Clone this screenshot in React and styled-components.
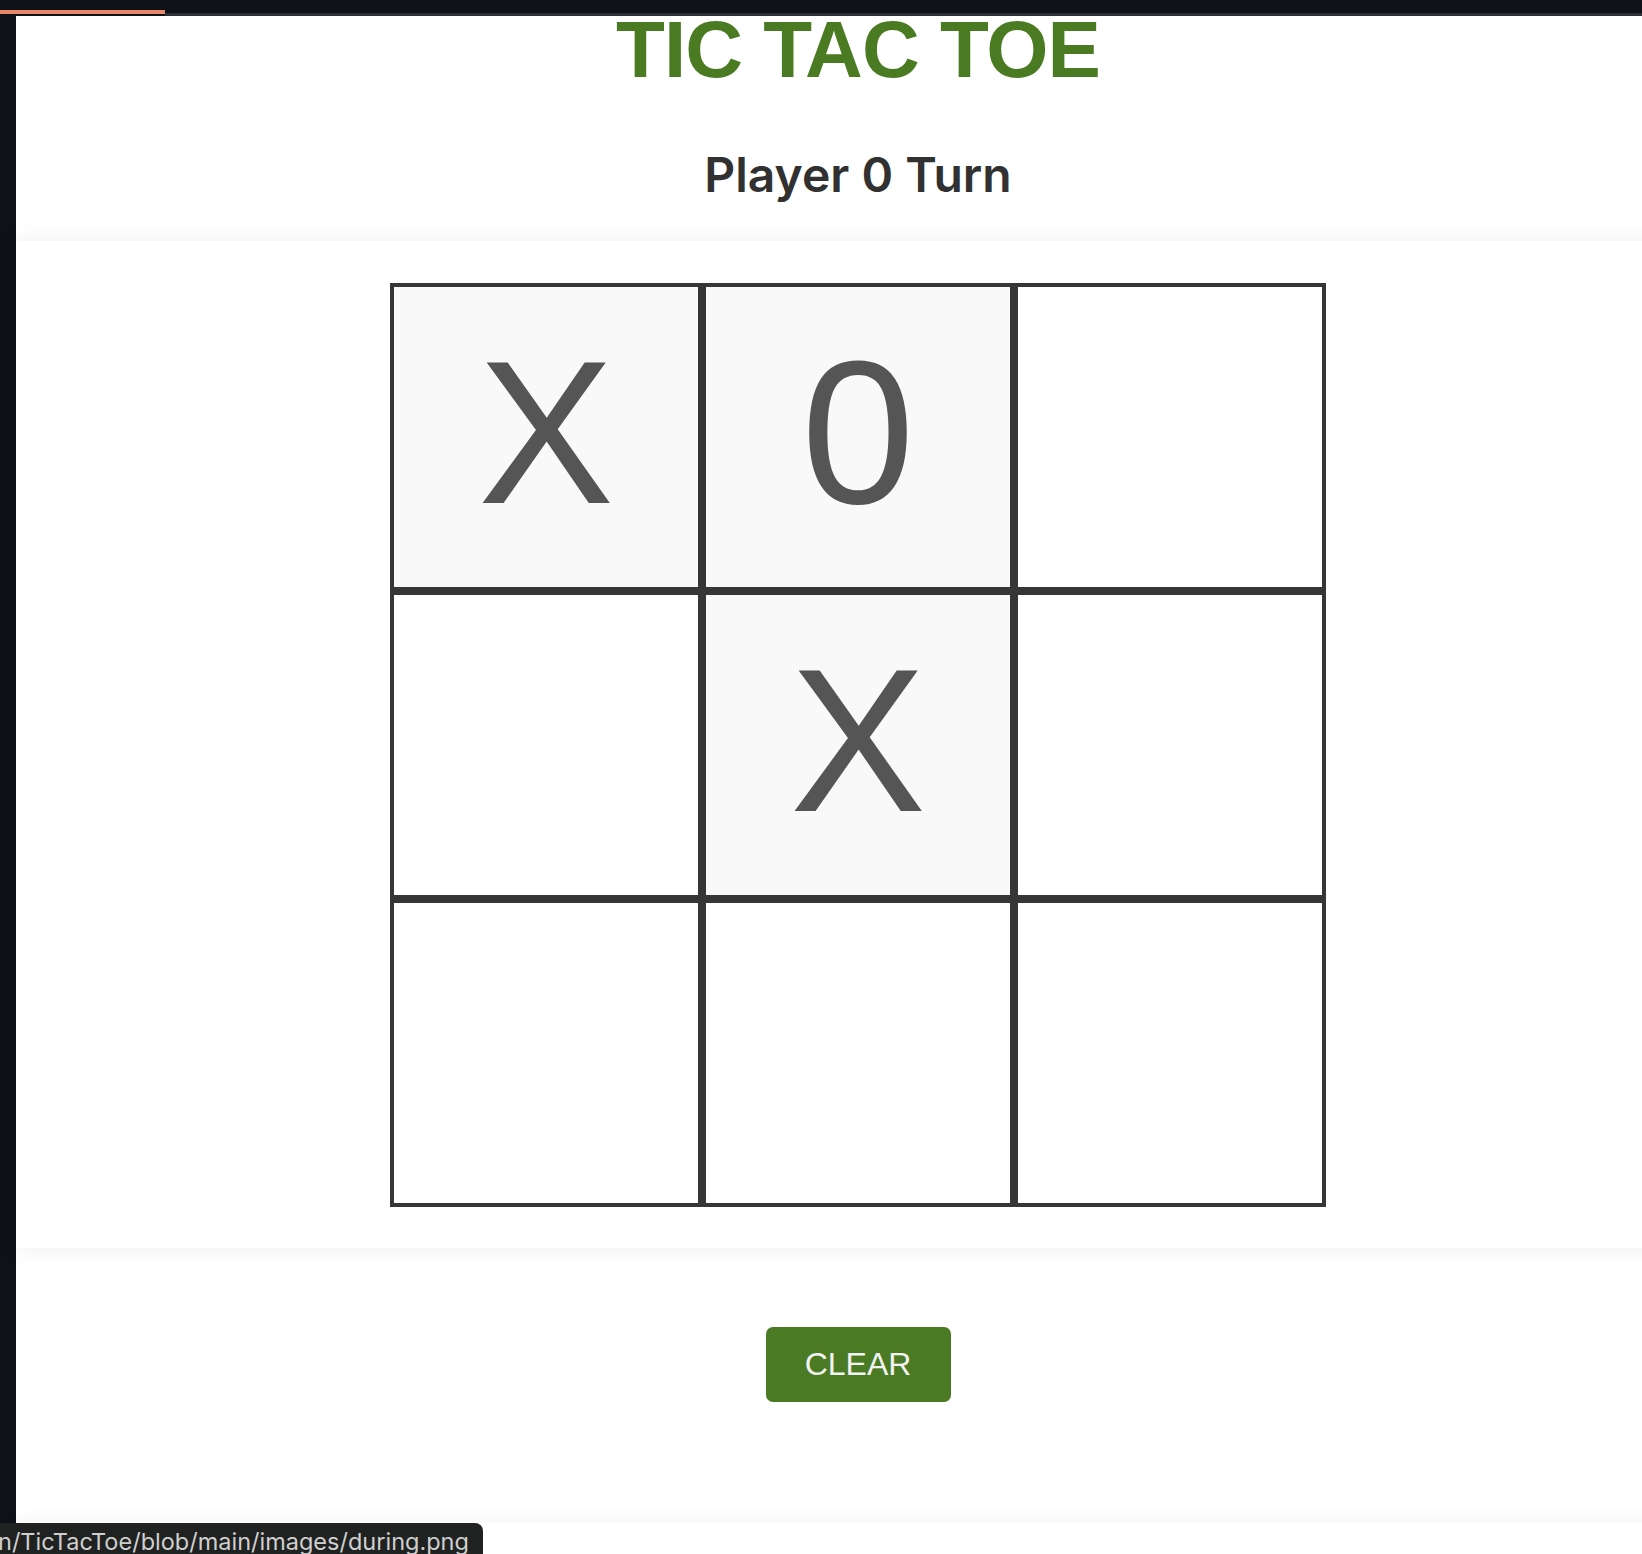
import React from "react";
import styled, { createGlobalStyle } from "styled-components";

const GlobalStyle = createGlobalStyle`
  html, body {
    margin: 0;
    padding: 0;
    background: #0e1116;
    overflow: hidden;
  }
`;

const Screen = styled.div`
  position: relative;
  width: 1642px;
  height: 1554px;
  overflow: hidden;
  display: flex;
  flex-direction: column;
  background: #0e1116;
`;

const ChromeBar = styled.div`
  height: 16px;
  flex-shrink: 0;
  display: flex;
  align-items: flex-end;
  background: #0e1116;
`;

const Progress = styled.div`
  height: ${(props) => (props.done ? "4px" : "3px")};
  width: ${(props) => (props.done ? "165px" : "auto")};
  flex: ${(props) => (props.done ? "0 0 auto" : "1")};
  margin-bottom: ${(props) => (props.done ? "2px" : "0")};
  background: ${(props) => (props.done ? "#e8876c" : "#2b3037")};
`;

const Body = styled.div`
  flex: 1;
  display: flex;
  min-height: 0;
`;

const SideStrip = styled.div`
  width: 16px;
  flex-shrink: 0;
  background: #0e1116;
`;

const Page = styled.main`
  width: 1684px;
  flex-shrink: 0;
  background: #ffffff;
  display: flex;
  flex-direction: column;
  align-items: stretch;
`;

const Header = styled.header`
  display: flex;
  flex-direction: column;
  align-items: center;
  margin-top: -6px;
  padding-bottom: 42px;
`;

const Title = styled.h1`
  margin: 0;
  font-family: "Liberation Sans", Arial, sans-serif;
  font-weight: 700;
  font-size: 80px;
  line-height: 80px;
  letter-spacing: -1px;
  color: #4a7b22;
`;

const Status = styled.h2`
  margin: 61px 0 0;
  font-family: Inter, "Noto Sans", sans-serif;
  font-weight: 600;
  font-size: 48px;
  line-height: 48px;
  color: #313131;
`;

const BoardSection = styled.section`
  position: relative;
  z-index: 1;
  display: flex;
  justify-content: center;
  padding: 42px 0 41px;
  box-shadow: 0 0 22px rgba(0, 0, 0, 0.07);
`;

const Board = styled.div`
  display: grid;
  grid-template-columns: repeat(3, 312px);
  grid-template-rows: repeat(3, 308px);
`;

const Cell = styled.div`
  box-sizing: border-box;
  border: 4px solid #363636;
  padding-bottom: 10px;
  background: ${(props) => (props.filled ? "#f9f9f9" : "#ffffff")};
  display: flex;
  align-items: center;
  justify-content: center;
  font-family: "Liberation Sans", Arial, sans-serif;
  font-size: 204px;
  line-height: 204px;
  color: #555555;
`;

const Controls = styled.div`
  height: 274px;
  display: flex;
  justify-content: center;
  align-items: flex-start;
  padding-top: 79px;
  box-sizing: border-box;
`;

const ClearButton = styled.button`
  width: 185px;
  height: 75px;
  border: none;
  border-radius: 7px;
  background: #4a7a23;
  color: #f2f2f2;
  font-family: "Liberation Sans", Arial, sans-serif;
  font-size: 32px;
  cursor: pointer;
`;

const Footer = styled.footer`
  position: relative;
  z-index: 1;
  flex: 1;
  box-shadow: 0 0 22px rgba(0, 0, 0, 0.06);
`;

const LinkTip = styled.div`
  position: absolute;
  left: 0;
  bottom: 0;
  z-index: 5;
  width: 483px;
  height: 31px;
  overflow: hidden;
  background: #202221;
  border-top-right-radius: 8px;
  color: #cfcfcf;
  font-family: Inter, "Liberation Sans", sans-serif;
  font-size: 23.5px;
  line-height: 38px;
  white-space: nowrap;
`;

const TipText = styled.span`
  display: inline-block;
  margin-left: -2px;
`;

const cells = ["X", "0", "", "", "X", "", "", "", ""];

export default function App() {
  return (
    <>
      <GlobalStyle />
      <Screen>
        <ChromeBar>
          <Progress done />
          <Progress />
        </ChromeBar>
        <Body>
          <SideStrip />
          <Page>
            <Header>
              <Title>TIC TAC TOE</Title>
              <Status>Player 0 Turn</Status>
            </Header>
            <BoardSection>
              <Board>
                {cells.map((mark, i) => (
                  <Cell key={i} filled={mark !== ""}>
                    {mark}
                  </Cell>
                ))}
              </Board>
            </BoardSection>
            <Controls>
              <ClearButton>CLEAR</ClearButton>
            </Controls>
            <Footer />
          </Page>
        </Body>
        <LinkTip>
          <TipText>n/TicTacToe/blob/main/images/during.png</TipText>
        </LinkTip>
      </Screen>
    </>
  );
}
